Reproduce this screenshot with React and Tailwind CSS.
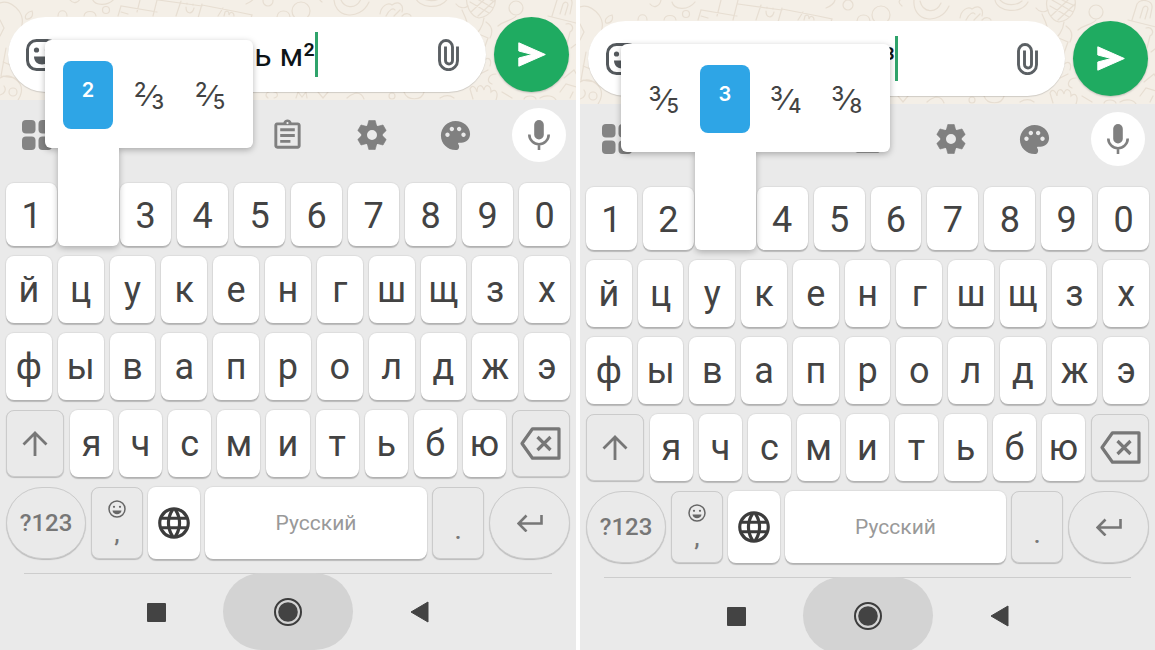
import { MdLanguage, MdOutlineAssignment, MdPalette } from 'react-icons/md';

const digits = ['1', '2', '3', '4', '5', '6', '7', '8', '9', '0'];
const topLetters = ['й', 'ц', 'у', 'к', 'е', 'н', 'г', 'ш', 'щ', 'з', 'х'];
const middleLetters = ['ф', 'ы', 'в', 'а', 'п', 'р', 'о', 'л', 'д', 'ж', 'э'];
const bottomLetters = ['я', 'ч', 'с', 'м', 'и', 'т', 'ь', 'б', 'ю'];

const keyShadow = 'shadow-[0_0_1px_1px_rgba(0,0,0,0.06),0_2px_1px_rgba(0,0,0,0.2)]';
const letterKey = `min-w-0 flex-1 rounded-lg bg-white text-4xl text-[#434343] ${keyShadow}`;
const grayKey = 'flex shrink-0 items-center justify-center border border-[#cbcbcb] bg-[#eaeaea] text-[#777] shadow-[0_1px_1px_rgba(0,0,0,0.2)]';

function Wallpaper() {
  return (
    <svg
      className="absolute bottom-0 left-0"
      width="580"
      height="104"
      viewBox="0 -4 580 104"
      fill="none"
      stroke="#e7ded2"
      strokeWidth="1.2"
      strokeLinecap="round"
      aria-hidden="true"
    >
      <path d="M0 3c8-3 14 2 19 8 5 7 4 14 1 21M0 36l4-8-4-8M26 19c4 1 8-3 6-8-5 1-8 5-6 8z" />
      <path d="M6 48l-5 28 14 2M3 62l10 4M0 78c8-5 16 0 20 6 3 5 1 12-2 16M0 95c4-1 7-5 4-9" />
      <circle cx="13" cy="92" r="4" />
      <path d="M58 16c0-7 9-7 9 0M84 16c1-6 11-6 12 0M70 0c4 5 10 2 11-4M92-2c2 8 16 9 23 0" />
      <circle cx="106" cy="10" r="3.5" />
      <path d="M118 16l3-10 36 6M137 12l4-16M153 16l5-20M121 12l7 2M158 0l44 6M176 16l5-15M198 18l4-14M202 5l36 7M218 16l5-8M238 12l14 3-1 3" />
      <path d="M186 7c0 7 6 8 8 1M187 3v1M193 4v1M224 16l1-4c3-2 4 0 4 3 1-4 5-3 5 1" />
      <circle cx="268" cy="1" r="5" />
      <circle cx="301" cy="11" r="9" />
      <path d="M277 17c1-8 12-8 13 0M246 4c5-2 8-4 9-8" />
      <path d="M334-4c-2 22 26 26 35 6M340-3c3 12 16 13 21 2M322 2c-4-3-3-5-2-6" />
      <path d="M380 14c1-8 8-12 12-9 7-5 12 0 10 7M386 16c3-6 7-9 9-6M394 16l6-6M402 16c4-4 8-2 9 0M415-4c2 12 26 15 33 2M420-4c6 6 16 6 22 1M456 4c3 4 8 5 12 2" />
      <path d="M467-4c-2 8 3 20 12 22 12-2 18-12 16-22M470 2l19 11M472-4l21 12M488-4L471 12M495 0l-17 16M482-4l13 6M462 10c4 8 8 18 8 30 9-8 13-13 14-22" />
      <circle cx="516" cy="8" r="7" />
      <path d="M498 26c7-6 14-5 18-10M474 32l14 6-8 22M486 22c6 4 7 10 4 16M484 60c5-4 8 0 6 6" />
      <path d="M552 16l5-16c4-6 16-4 15 4l-2 10M560 14l3-10c2-3 5-2 5 1l-3 10M548 16l32 8M566 24c6-2 9 5 4 8l-3 12M571 48l8-6" />
      <path d="M564 78l10-8 6 10M560 92l6-8 14 4M570 98l3-6" />
      <path d="M473 99l-3-10c2-5 6-2 7 3 0-8 5-8 7-2 1-7 7-5 7 2 4-4 8 0 5 8M496 74c-8 0-10 8-4 10M488 70l-8 4M502 92l10 6M524 99c2-4 10-4 12 0M540 98c6-4 14-2 16 2" />
      <circle cx="392" cy="96" r="3" />
      <path d="M268 98c-4-3-1-6 1-6M274 98c5-1 4-6 0-6M296 98l2-6 4 5 4-5 1 6M318 92l5 6 5-6M347 98c4-4 6-4 9-5 5 0 7 3 8 6M404 92c3 9 18 9 20 0M440 98c5-3 10-3 14 0" />
    </svg>
  );
}

function EmojiIcon() {
  return (
    <svg width="32" height="32" viewBox="0 0 32 32" fill="none" aria-hidden="true">
      <rect x="1.5" y="1.5" width="29" height="29" rx="9" stroke="#54595d" strokeWidth="3" />
      <circle cx="10.5" cy="11" r="2.6" fill="#54595d" />
      <circle cx="21.5" cy="11" r="2.6" fill="#54595d" />
      <path d="M8 17.5h16c0 5-3.5 8-8 8s-8-3-8-8z" fill="#54595d" />
    </svg>
  );
}

function ClipIcon() {
  return (
    <svg width="21" height="32" viewBox="0 0 21 32" fill="none" stroke="#5b6064" strokeWidth="2.9" aria-hidden="true">
      <path d="M19.5 7.5v14.2a9 9 0 0 1-18 0V8a6.500 6.500 0 0 1 13 0v13.500a3.500 3.500 0 0 1-7 0V7.500" />
    </svg>
  );
}

function GridIcon() {
  return (
    <svg width="30" height="30" viewBox="0 0 30 30" fill="#848484" aria-hidden="true">
      <rect width="13.5" height="13.5" rx="4" />
      <rect x="16.5" width="13.5" height="13.5" rx="4" />
      <rect y="16.5" width="13.5" height="13.5" rx="4" />
      <rect x="16.5" y="16.5" width="13.5" height="13.5" rx="4" />
    </svg>
  );
}

function GearIcon() {
  return (
    <svg width="30" height="30" viewBox="-15 -15 30 30" fill="currentColor" aria-hidden="true">
      <circle r="7.8" fill="none" stroke="currentColor" strokeWidth="5.6" />
      {[0, 60, 120, 180, 240, 300].map((angle) => (
        <path key={angle} transform={`rotate(${angle})`} d="M-3.200-14.500h6.400l1.600 6h-9.600z" strokeLinejoin="round" stroke="currentColor" strokeWidth=".6" />
      ))}
    </svg>
  );
}

function MicIcon() {
  return (
    <svg width="22" height="30" viewBox="0 0 22 30" fill="none" stroke="currentColor" strokeWidth="2.6" aria-hidden="true">
      <rect x="6.2" width="9.6" height="19.5" rx="4.8" fill="currentColor" stroke="none" />
      <path d="M1.300 14.500a9.700 9.700 0 0 0 19.400 0M11 24v6" />
    </svg>
  );
}

function MessageBar({ text }) {
  return (
    <div className="relative flex items-center gap-2 pr-[7px] pl-2">
      <div className="flex h-[75px] flex-1 items-center rounded-full bg-white pr-[27px] pl-[18px] shadow-[0_1px_1px_rgba(0,0,0,0.15)]">
        <button type="button" aria-label="Эмодзи">
          <EmojiIcon />
        </button>
        <input
          type="text"
          aria-label="Сообщение"
          defaultValue={text}
          className="w-[257px] bg-transparent text-right text-[32px] text-[#0d1417] outline-none"
        />
        <span className="h-[45px] w-[3px] shrink-0 bg-[#2fa36b]" />
        <button type="button" aria-label="Прикрепить" className="ml-auto">
          <ClipIcon />
        </button>
      </div>
      <button
        type="button"
        aria-label="Отправить"
        className="flex size-[75px] items-center justify-center rounded-full bg-[#1fab61] shadow-[0_1px_2px_rgba(0,0,0,0.2)]"
      >
        <svg width="28" height="25" viewBox="0 0 28 25" fill="#fff" stroke="#fff" strokeWidth="1" strokeLinejoin="round" aria-hidden="true">
          <path d="M.8.8l26.500 11.700L.8 24.200v-8.200l13.500-3.500L.8 9z" />
        </svg>
      </button>
    </div>
  );
}

function Toolbar() {
  return (
    <div className="flex items-center justify-between px-[10px] pt-2 pb-[21px] text-[#808080]">
      <button type="button" aria-label="Меню" className="flex w-[54px] justify-center">
        <GridIcon />
      </button>
      <span className="w-[54px]" />
      <span className="w-[54px]" />
      <button type="button" aria-label="Буфер обмена" className="flex w-[54px] justify-center">
        <MdOutlineAssignment size={35} />
      </button>
      <button type="button" aria-label="Настройки" className="flex w-[54px] justify-center">
        <GearIcon />
      </button>
      <button type="button" aria-label="Темы" className="flex w-[54px] justify-center">
        <MdPalette size={35} />
      </button>
      <button type="button" aria-label="Голосовой ввод" className="flex size-[54px] items-center justify-center rounded-full bg-white">
        <MicIcon />
      </button>
    </div>
  );
}

// raised digit, optionally followed by a slash and a lowered one
function Fraction({ value }) {
  const [top, bottom] = value.split('/');
  return (
    <span className="flex h-[34px] justify-center pt-0.5 font-['Inter',sans-serif] text-xl leading-none font-medium">
      <span className={bottom ? '' : 'font-semibold'}>{top}</span>
      {bottom && (
        <>
          <span className="self-center text-[28px] leading-none font-normal">⁄</span>
          <span className="self-end">{bottom}</span>
        </>
      )}
    </span>
  );
}

// long-press popup, its active option sits right above the pressed key
function PressedKey({ options, active, className }) {
  return (
    <div className="relative z-10 min-w-0 flex-1 drop-shadow-[0_2px_3px_rgba(0,0,0,0.28)]">
      <div className="absolute -inset-x-[5px] bottom-0 h-[104px] rounded-b-md bg-white" />
      <div className={`absolute bottom-[98px] flex gap-[11px] rounded-md bg-white px-[18px] pt-[21px] pb-[19px] ${className}`}>
        {options.map((option) => (
          <button
            key={option}
            type="button"
            className={
              option === active
                ? 'h-[68px] w-[50px] rounded-lg bg-[#2ea5e6] text-white'
                : 'h-[68px] w-[50px] text-[#434343]'
            }
          >
            <Fraction value={option} />
          </button>
        ))}
      </div>
    </div>
  );
}

function LetterRow({ letters }) {
  return (
    <div className="flex h-[67px] gap-1.5">
      {letters.map((letter) => (
        <button key={letter} type="button" className={letterKey}>
          {letter}
        </button>
      ))}
    </div>
  );
}

function Keyboard({ pressed, options, active, popupClass }) {
  return (
    <div className="flex flex-col gap-[10px] px-1.5">
      <div className="flex h-[63px] gap-1.5">
        {digits.map((digit) =>
          digit === pressed ? (
            <PressedKey key={digit} options={options} active={active} className={popupClass} />
          ) : (
            <button key={digit} type="button" className={`pt-0.5 ${letterKey}`}>
              {digit}
            </button>
          )
        )}
      </div>
      <LetterRow letters={topLetters} />
      <LetterRow letters={middleLetters} />
      <div className="flex h-[67px] gap-1.5">
        <button type="button" aria-label="Shift" className={`w-[58px] rounded-lg ${grayKey}`}>
          <svg width="26" height="26" viewBox="0 0 26 26" fill="none" stroke="currentColor" strokeWidth="2.8" aria-hidden="true">
            <path d="M13 25V2M1.500 13.500L13 2l11.500 11.500" />
          </svg>
        </button>
        {bottomLetters.map((letter) => (
          <button key={letter} type="button" className={letterKey}>
            {letter}
          </button>
        ))}
        <button type="button" aria-label="Удалить" className={`w-[58px] rounded-lg ${grayKey}`}>
          <svg width="41" height="33" viewBox="0 0 41 33" fill="none" stroke="currentColor" strokeWidth="3.2" strokeLinejoin="round" aria-hidden="true">
            <path d="M12.500 1.800h26.500v29.400h-26.500L2 16.500z" />
            <path d="M17.500 10l13 13M30.500 10l-13 13" />
          </svg>
        </button>
      </div>
      <div className="flex h-[72px] gap-[5px]">
        <button type="button" className={`w-20 rounded-full text-2xl font-medium ${grayKey}`}>
          ?123
        </button>
        <button type="button" className={`w-[52px] flex-col rounded-lg pt-1 text-2xl font-medium ${grayKey}`}>
          <svg width="18" height="18" viewBox="0 0 18 18" fill="none" stroke="#666" strokeWidth="1.5" aria-hidden="true">
            <circle cx="9" cy="9" r="8" />
            <circle cx="6" cy="6.8" r="1.1" fill="#666" stroke="none" />
            <circle cx="12" cy="6.8" r="1.1" fill="#666" stroke="none" />
            <path d="M4.500 10.500h9c-.5 5-8.500 5-9 0z" fill="#666" stroke="none" />
          </svg>
          <span>,</span>
        </button>
        <button type="button" aria-label="Язык" className={`flex w-[52px] items-center justify-center rounded-lg bg-white text-[#3c3c3c] ${keyShadow}`}>
          <MdLanguage size={38} />
        </button>
        <button type="button" className={`min-w-0 flex-1 rounded-lg bg-white pt-0.5 text-[21px] text-[#999] ${keyShadow}`}>
          Русский
        </button>
        <button type="button" className={`w-[52px] rounded-lg pt-4 text-2xl font-medium ${grayKey}`}>
          .
        </button>
        <button type="button" aria-label="Ввод" className={`w-[81px] rounded-full ${grayKey}`}>
          <svg width="26" height="18" viewBox="0 0 26 18" fill="none" stroke="currentColor" strokeWidth="2.6" aria-hidden="true">
            <path d="M24.500 1v8.500H2M9.500 1.500l-8 8 8 8" />
          </svg>
        </button>
      </div>
    </div>
  );
}

function SystemNav() {
  return (
    <nav className="mx-6 mt-[14px] flex items-center justify-center gap-[57px] border-t border-[#cdcdcd] text-[#434343]">
      <button type="button" aria-label="Недавние">
        <svg width="19" height="19" viewBox="0 0 19 19" fill="currentColor" aria-hidden="true">
          <rect width="19" height="19" rx="1" />
        </svg>
      </button>
      <button type="button" aria-label="Домой" className="-mt-px flex h-[77px] w-[130px] items-center justify-center rounded-full bg-[#d3d3d3]">
        <svg width="28" height="28" viewBox="0 0 28 28" fill="none" aria-hidden="true">
          <circle cx="14" cy="14" r="13" stroke="#3c3c3c" strokeWidth="2" />
          <circle cx="14" cy="14" r="9.8" fill="#434343" />
        </svg>
      </button>
      <button type="button" aria-label="Назад">
        <svg width="19" height="22" viewBox="0 0 19 22" fill="currentColor" stroke="currentColor" strokeWidth="1" strokeLinejoin="round" aria-hidden="true">
          <path d="M18 1v20L1 11z" />
        </svg>
      </button>
    </nav>
  );
}

function Phone({ headerClass, text, ...keyboard }) {
  return (
    <section className="min-w-0 overflow-hidden bg-[#eaeaea]">
      <header className={`relative overflow-hidden bg-[#f4efe7] pb-2 ${headerClass}`}>
        <Wallpaper />
        <MessageBar text={text} />
      </header>
      <Toolbar />
      <Keyboard {...keyboard} />
      <SystemNav />
    </section>
  );
}

export default function App() {
  return (
    <main className="grid h-screen grid-cols-[576fr_575fr] gap-1 overflow-hidden bg-white font-['Roboto',sans-serif]">
      <Phone
        headerClass="pt-[17px]"
        text="ь м²"
        pressed="2"
        options={['2', '2/3', '2/5']}
        active="2"
        popupClass="-left-[18px]"
      />
      <Phone
        headerClass="pt-[21px]"
        text="ь м³"
        pressed="3"
        options={['3/5', '3', '3/4', '3/8']}
        active="3"
        popupClass="-left-[79px]"
      />
    </main>
  );
}
